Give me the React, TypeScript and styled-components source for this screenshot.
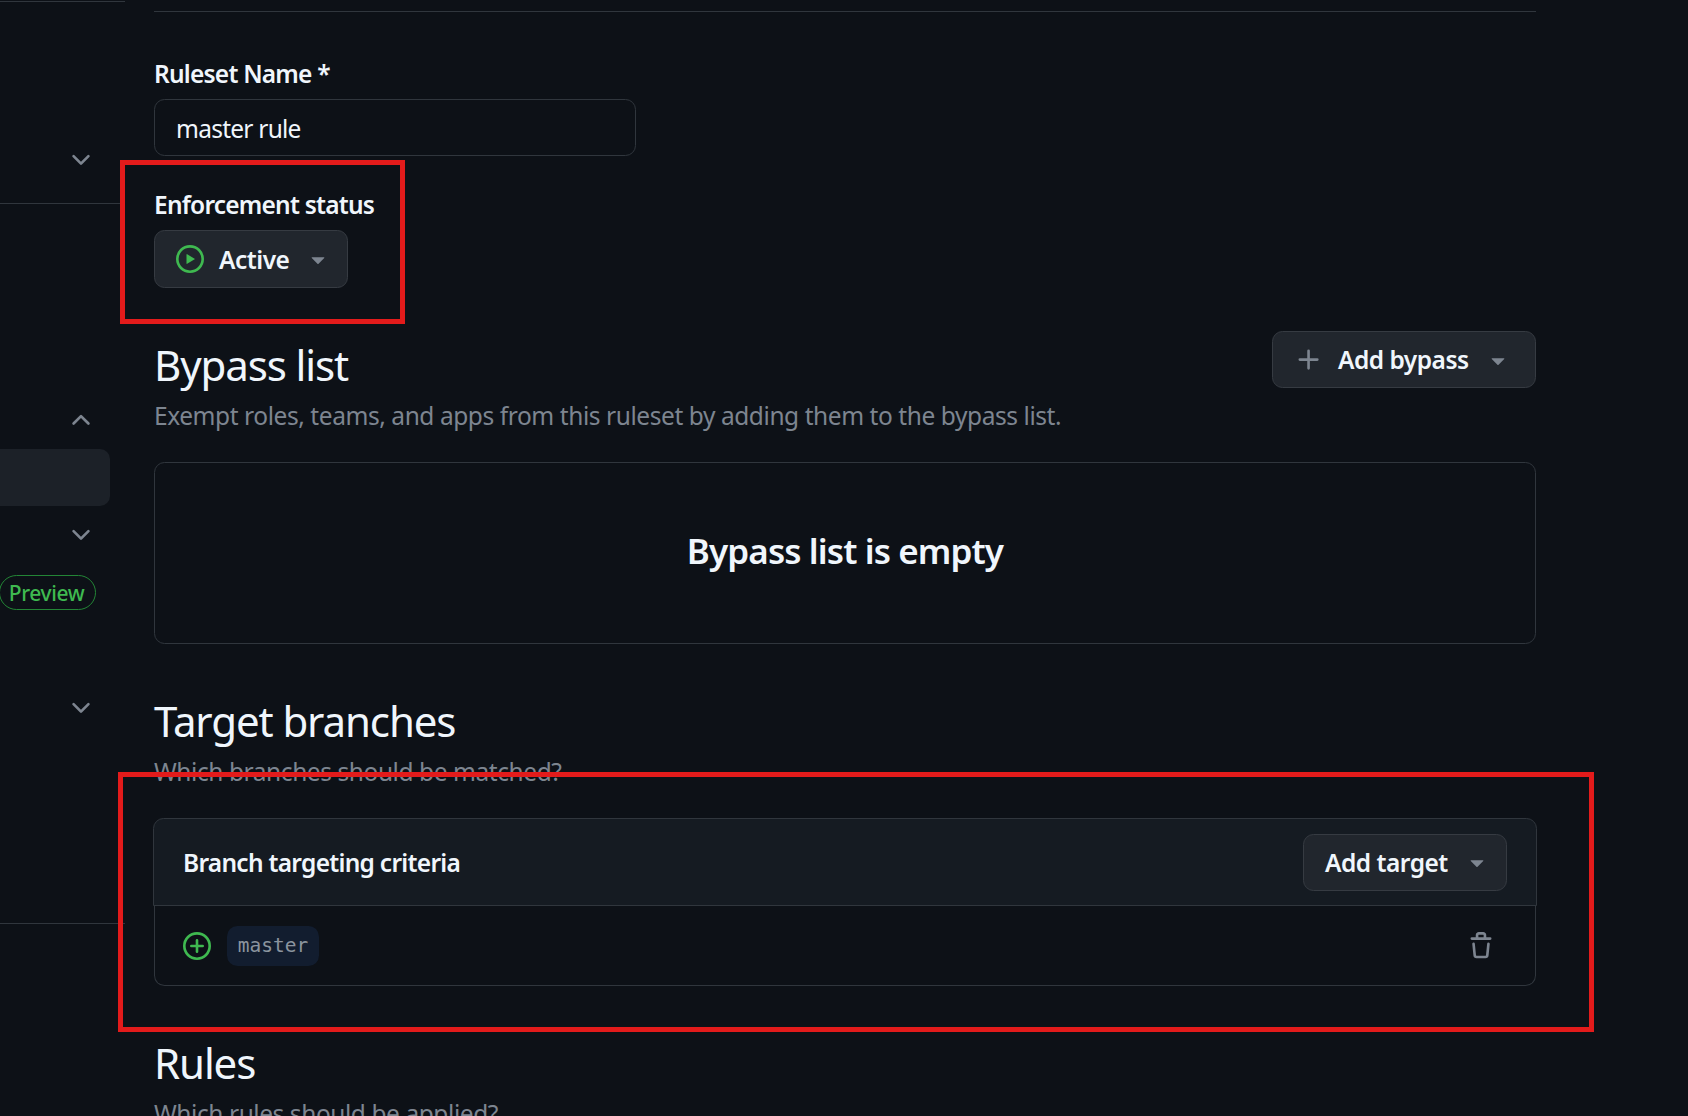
import React from 'react';
import styled, { createGlobalStyle } from 'styled-components';

const GlobalStyle = createGlobalStyle`
  html, body {
    margin: 0;
    padding: 0;
    background: #0d1117;
  }

  body {
    color: #f0f6fc;
    font-family: "Noto Sans", "Open Sans", sans-serif;
    font-size: 24.5px;
  }

  * {
    box-sizing: border-box;
  }
`;

const ICONS = {
  chevronDown:
    'M12.78 5.22a.749.749 0 0 1 0 1.06l-4.25 4.25a.749.749 0 0 1-1.06 0L3.22 6.28a.749.749 0 1 1 1.06-1.06L8 8.939l3.72-3.719a.749.749 0 0 1 1.06 0Z',
  chevronUp:
    'M3.22 10.53a.749.749 0 0 1 0-1.06l4.25-4.25a.749.749 0 0 1 1.06 0l4.25 4.25a.749.749 0 1 1-1.06 1.06L8 6.811 4.28 10.53a.749.749 0 0 1-1.06 0Z',
  play: 'M8 0a8 8 0 1 1 0 16A8 8 0 0 1 8 0ZM1.5 8a6.5 6.5 0 1 0 13 0 6.5 6.5 0 0 0-13 0Zm4.879-2.773 4.264 2.559a.25.25 0 0 1 0 .428l-4.264 2.559A.25.25 0 0 1 6 10.559V5.442a.25.25 0 0 1 .379-.215Z',
  plus: 'M7.75 2a.75.75 0 0 1 .75.75V7h4.25a.75.75 0 0 1 0 1.5H8.5v4.25a.75.75 0 0 1-1.5 0V8.5H2.75a.75.75 0 0 1 0-1.5H7V2.75A.75.75 0 0 1 7.75 2Z',
  plusCircle:
    'M8 0a8 8 0 1 1 0 16A8 8 0 0 1 8 0ZM1.5 8a6.5 6.5 0 1 0 13 0 6.5 6.5 0 0 0-13 0Zm7.25-3.25v2.5h2.5a.75.75 0 0 1 0 1.5h-2.5v2.5a.75.75 0 0 1-1.5 0v-2.5h-2.5a.75.75 0 0 1 0-1.5h2.5v-2.5a.75.75 0 0 1 1.5 0Z',
  trash:
    'M11 1.75V3h2.25a.75.75 0 0 1 0 1.5H2.75a.75.75 0 0 1 0-1.5H5V1.75C5 .784 5.784 0 6.75 0h2.5C10.216 0 11 .784 11 1.75ZM4.496 6.675l.66 6.6a.25.25 0 0 0 .249.225h5.19a.25.25 0 0 0 .249-.225l.66-6.6a.75.75 0 0 1 1.492.149l-.66 6.6A1.748 1.748 0 0 1 10.595 15h-5.19a1.75 1.75 0 0 1-1.741-1.575l-.66-6.6a.75.75 0 1 1 1.492-.15ZM6.5 1.75V3h3V1.75a.25.25 0 0 0-.25-.25h-2.5a.25.25 0 0 0-.25.25Z',
  caret:
    'm4.427 7.427 3.396 3.396a.25.25 0 0 0 .354 0l3.396-3.396A.25.25 0 0 0 11.396 7H4.604a.25.25 0 0 0-.177.427Z',
};

const IconSvg = styled.svg<{ $color: string }>`
  display: block;
  flex: none;
  width: 28px;
  height: 28px;
  fill: ${({ $color }) => $color};
`;

const Icon: React.FC<{ name: keyof typeof ICONS; color?: string }> = ({
  name,
  color = '#7d8590',
}) => (
  <IconSvg viewBox="0 0 16 16" $color={color}>
    <path d={ICONS[name]} />
  </IconSvg>
);

const Page = styled.div`
  position: relative;
  display: flex;
  width: 1688px;
  height: 1116px;
  overflow: hidden;
  background: #0d1117;
`;

const Sidebar = styled.aside`
  display: flex;
  flex-direction: column;
  flex: none;
  width: 125px;
  padding-top: 1px;

  > * {
    flex: none;
  }
`;

const SideDivider = styled.div<{ $gap?: number; $width?: number }>`
  width: ${({ $width }) => $width ?? 125}px;
  height: 1px;
  margin-top: ${({ $gap }) => $gap ?? 0}px;
  background: #30363d;
`;

const SideRow = styled.div<{ $gap?: number; $active?: boolean }>`
  display: flex;
  align-items: center;
  justify-content: flex-end;
  width: 110px;
  height: 57px;
  margin-top: ${({ $gap }) => $gap ?? 0}px;
  padding-right: 15px;
  background: ${({ $active }) => ($active ? '#1c2128' : 'transparent')};
  border-radius: ${({ $active }) => ($active ? '0 10px 10px 0' : '0')};
`;

const PreviewPill = styled.span`
  display: flex;
  align-items: center;
  justify-content: center;
  width: 97px;
  height: 35px;
  margin-left: -1px;
  padding-right: 2px;
  color: #3fb950;
  font-size: 21px;
  font-weight: 500;
  letter-spacing: -0.4px;
  border: 1px solid #238636;
  border-radius: 18px;
`;

const PreviewRow = styled.div`
  display: flex;
  align-items: center;
  height: 57px;
  padding-top: 2px;
`;

const Main = styled.main`
  display: flex;
  flex-direction: column;
  flex: none;
  width: 1382px;
  margin-left: 29px;
  padding-top: 11px;

  > * {
    flex: none;
  }
`;

const TopRule = styled.div`
  height: 1px;
  background: #30363d;
`;

const FieldLabel = styled.label<{ $gap: number }>`
  display: block;
  margin-top: ${({ $gap }) => $gap}px;
  font-weight: 600;
  line-height: 36px;
  letter-spacing: -0.78px;
`;

const NameInput = styled.div`
  display: flex;
  align-items: center;
  width: 482px;
  height: 57px;
  margin-top: 7px;
  padding: 2px 21px 0;
  border: 1px solid #30363d;
  border-radius: 10.5px;
  letter-spacing: -0.75px;
`;

const Button = styled.button<{ $width: number; $pad: number; $height?: number }>`
  display: flex;
  align-items: center;
  gap: 15px;
  flex: none;
  width: ${({ $width }) => $width}px;
  height: ${({ $height }) => $height ?? 57}px;
  padding: 0 0 0 ${({ $pad }) => $pad}px;
  color: #f0f6fc;
  font: inherit;
  font-weight: 600;
  letter-spacing: -0.5px;
  background: #21262d;
  border: 1px solid #363b42;
  border-radius: 10.5px;
`;

const StatusButton = styled(Button)`
  margin-top: 7px;
`;

const SectionHead = styled.div<{ $gap: number }>`
  display: flex;
  justify-content: space-between;
  align-items: flex-start;
  margin-top: ${({ $gap }) => $gap}px;
`;

const HeadText = styled.div`
  padding-top: 6px;
`;

const PlainHead = styled.div<{ $gap: number }>`
  margin-top: ${({ $gap }) => $gap}px;
`;

const Heading = styled.h2`
  margin: 0;
  font-size: 42px;
  font-weight: 400;
  line-height: 56px;
  letter-spacing: -1.1px;
`;

const Description = styled.p`
  margin: 5px 0 0;
  color: #7d8590;
  line-height: 36px;
  white-space: nowrap;
  letter-spacing: -0.43px;
`;

const EmptyBox = styled.div`
  display: flex;
  align-items: center;
  justify-content: center;
  height: 182px;
  margin-top: 28px;
  padding-bottom: 6px;
  font-size: 35px;
  font-weight: 600;
  letter-spacing: -0.9px;
  border: 1px solid #30363d;
  border-radius: 10.5px;
`;

const Card = styled.section`
  margin: 28px -1px 0;
`;

const CardHeader = styled.header`
  display: flex;
  align-items: center;
  justify-content: space-between;
  height: 88px;
  padding: 0 29px;
  background: #151b22;
  border: 1px solid #30363d;
  border-radius: 10.5px 10.5px 0 0;
`;

const CardTitle = styled.h3`
  margin: 0;
  font-size: 24.5px;
  font-weight: 600;
  letter-spacing: -0.72px;
`;

const CardBody = styled.div`
  display: flex;
  align-items: center;
  gap: 16px;
  height: 80px;
  margin: 0 1px;
  padding: 0 40px 0 28px;
  border: 1px solid #30363d;
  border-top: 0;
  border-radius: 0 0 10.5px 10.5px;
`;

const BranchChip = styled.code`
  display: flex;
  align-items: center;
  justify-content: center;
  width: 92px;
  height: 40px;
  color: #8b949e;
  font-family: "DejaVu Sans Mono", monospace;
  font-size: 19.5px;
  background: #121d2f;
  border-radius: 10.5px;
`;

const TrashSlot = styled.span`
  display: inline-flex;
  margin-left: auto;
`;

const Mark = styled.div`
  position: absolute;
  border: 5px solid #e31b1b;
  pointer-events: none;
`;

const StatusMark = styled(Mark)`
  left: 120px;
  top: 160px;
  width: 285px;
  height: 164px;
`;

const TargetMark = styled(Mark)`
  left: 118px;
  top: 772px;
  width: 1476px;
  height: 260px;
`;

const GREEN = '#3fb950';

const App: React.FC = () => (
  <>
    <GlobalStyle />
    <Page>
      <Sidebar>
        <SideDivider />
        <SideRow $gap={129}>
          <Icon name="chevronDown" />
        </SideRow>
        <SideDivider $gap={15} $width={120} />
        <SideRow $gap={187}>
          <Icon name="chevronUp" />
        </SideRow>
        <SideRow $active $gap={1} />
        <SideRow>
          <Icon name="chevronDown" />
        </SideRow>
        <PreviewRow>
          <PreviewPill>Preview</PreviewPill>
        </PreviewRow>
        <SideRow $gap={59}>
          <Icon name="chevronDown" />
        </SideRow>
        <SideDivider $gap={187} />
      </Sidebar>

      <Main>
        <TopRule />

        <FieldLabel $gap={44}>Ruleset Name *</FieldLabel>
        <NameInput>master rule</NameInput>

        <FieldLabel $gap={31}>Enforcement status</FieldLabel>
        <StatusButton $width={194} $pad={21} $height={58}>
          <Icon name="play" color={GREEN} />
          Active
          <Icon name="caret" />
        </StatusButton>

        <SectionHead $gap={43}>
          <HeadText>
            <Heading>Bypass list</Heading>
            <Description>
              Exempt roles, teams, and apps from this ruleset by adding them to the bypass list.
            </Description>
          </HeadText>
          <Button $width={264} $pad={22}>
            <Icon name="plus" />
            Add bypass
            <Icon name="caret" />
          </Button>
        </SectionHead>

        <EmptyBox>Bypass list is empty</EmptyBox>

        <PlainHead $gap={49}>
          <Heading>Target branches</Heading>
          <Description>Which branches should be matched?</Description>
        </PlainHead>

        <Card>
          <CardHeader>
            <CardTitle>Branch targeting criteria</CardTitle>
            <Button $width={204} $pad={21}>
              Add target
              <Icon name="caret" />
            </Button>
          </CardHeader>
          <CardBody>
            <Icon name="plusCircle" color={GREEN} />
            <BranchChip>master</BranchChip>
            <TrashSlot>
              <Icon name="trash" />
            </TrashSlot>
          </CardBody>
        </Card>

        <PlainHead $gap={49}>
          <Heading>Rules</Heading>
          <Description>Which rules should be applied?</Description>
        </PlainHead>
      </Main>

      <StatusMark />
      <TargetMark />
    </Page>
  </>
);

export default App;
